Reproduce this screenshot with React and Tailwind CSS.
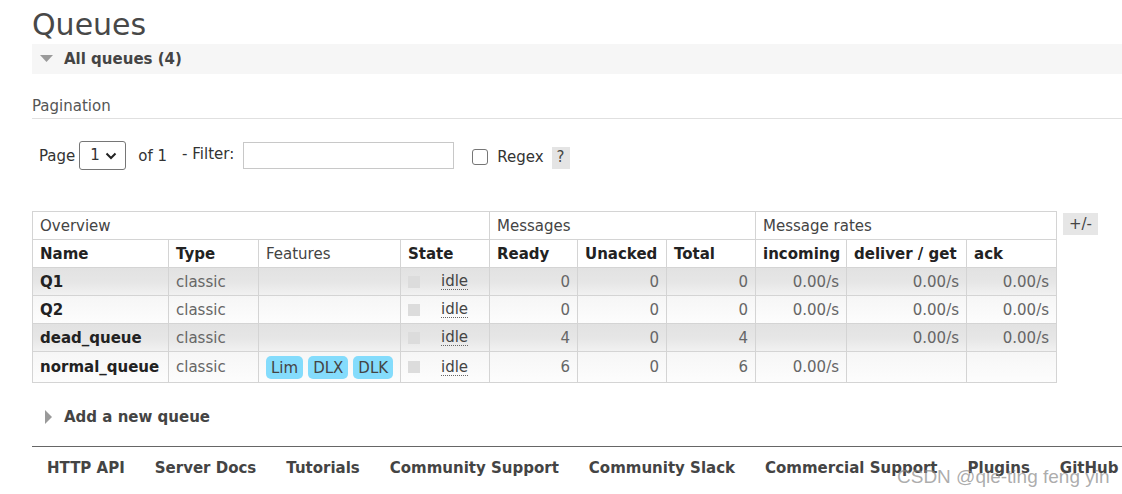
import React from "react";

const rows = [
  { name: "Q1", features: [], ready: 0, unacked: 0, total: 0, incoming: "0.00/s", deliver: "0.00/s", ack: "0.00/s" },
  { name: "Q2", features: [], ready: 0, unacked: 0, total: 0, incoming: "0.00/s", deliver: "0.00/s", ack: "0.00/s" },
  { name: "dead_queue", features: [], ready: 4, unacked: 0, total: 4, incoming: "", deliver: "0.00/s", ack: "0.00/s" },
  { name: "normal_queue", features: ["Lim", "DLX", "DLK"], ready: 6, unacked: 0, total: 6, incoming: "0.00/s", deliver: "", ack: "" },
];

const links = [
  "HTTP API",
  "Server Docs",
  "Tutorials",
  "Community Support",
  "Community Slack",
  "Commercial Support",
  "Plugins",
  "GitHub",
];

function Cell({ children, right, className = "" }) {
  return (
    <td
      className={
        "border border-[#d4d4d4] px-[7px] py-0 align-middle " +
        (right ? "text-right pr-[7px] " : "") +
        className
      }
    >
      {children}
    </td>
  );
}

export default function App() {
  return (
    <div className="relative min-h-[494px] bg-white pl-[32px] font-['DejaVu_Sans',Verdana,sans-serif] text-[15px] text-[#444]">
      <h1 className="pt-[9px] text-[30px] leading-[31px] text-[#484848]">Queues</h1>

      <div className="mt-[4px] flex h-[30px] items-center bg-[#f6f6f6]">
        <svg width="13" height="8" viewBox="0 0 13 8" className="ml-[8px]">
          <polygon points="0,0 13,0 6.5,7" fill="#9a9a9a" />
        </svg>
        <span className="ml-[11px] font-bold text-[#444]">All queues (4)</span>
      </div>

      <div className="mt-[23px] border-b border-[#e0e0e0] pb-[3px] leading-[18px] text-[#555]">
        Pagination
      </div>

      <div className="mt-[22px] flex items-center pl-[7px] text-[#333]">
        <span className="mt-[2px]">Page</span>
        <div className="ml-[4px] flex h-[29px] w-[47px] items-center justify-between rounded-[3px] border border-[#767676] pl-[10px] pr-[8px]">
          <span>1</span>
          <svg width="12" height="8" viewBox="0 0 12 8">
            <polyline points="1.5,1.5 6,6 10.5,1.5" fill="none" stroke="#222" strokeWidth="2" />
          </svg>
        </div>
        <span className="ml-[12px] mt-[2px]">of 1</span>
        <span className="ml-[15px] -mt-[2px]">- Filter:</span>
        <div className="ml-[9px] h-[27px] w-[211px] border border-[#c8c8c8] bg-white" />
        <div className="ml-[18px] mt-[2px] h-[16px] w-[16px] rounded-[3px] border border-[#767676] bg-white" />
        <span className="ml-[9px] mt-[4px]">Regex</span>
        <span className="ml-[8px] mt-[4px] flex h-[22px] w-[18px] items-center justify-center bg-[#e4e4e4] text-[#444]">
          ?
        </span>
      </div>

      <div className="mt-[41px] flex items-start gap-[6px]">
        <table className="w-[1024px] table-fixed border-collapse border border-[#d4d4d4] leading-[18px]">
          <colgroup>
            <col className="w-[136px]" />
            <col className="w-[90px]" />
            <col className="w-[142px]" />
            <col className="w-[89px]" />
            <col className="w-[88px]" />
            <col className="w-[89px]" />
            <col className="w-[89px]" />
            <col className="w-[91px]" />
            <col className="w-[120px]" />
            <col className="w-[90px]" />
          </colgroup>
          <thead>
            <tr className="h-[28px] text-left font-normal text-[#444]">
              <th colSpan={4} className="border border-[#d4d4d4] px-[7px] font-normal">Overview</th>
              <th colSpan={3} className="border border-[#d4d4d4] px-[7px] font-normal">Messages</th>
              <th colSpan={3} className="border border-[#d4d4d4] px-[7px] font-normal">Message rates</th>
            </tr>
            <tr className="h-[28px] text-left text-[#222]">
              <th className="border border-[#d4d4d4] px-[7px] font-bold">Name</th>
              <th className="border border-[#d4d4d4] px-[7px] font-bold">Type</th>
              <th className="border border-[#d4d4d4] px-[7px] font-normal text-[#444]">Features</th>
              <th className="border border-[#d4d4d4] px-[7px] font-bold">State</th>
              <th className="border border-[#d4d4d4] px-[7px] font-bold">Ready</th>
              <th className="border border-[#d4d4d4] px-[7px] font-bold">Unacked</th>
              <th className="border border-[#d4d4d4] px-[7px] font-bold">Total</th>
              <th className="border border-[#d4d4d4] px-[7px] font-bold">incoming</th>
              <th className="border border-[#d4d4d4] px-[7px] font-bold">deliver / get</th>
              <th className="border border-[#d4d4d4] px-[7px] font-bold">ack</th>
            </tr>
          </thead>
          <tbody>
            {rows.map((r, i) => (
              <tr
                key={r.name}
                className={
                  (i === 3 ? "h-[31px] " : "h-[28px] ") +
                  (i % 2 === 0
                    ? "bg-gradient-to-b from-[#e2e2e2] via-[#e6e6e6] to-[#f2f2f2]"
                    : "bg-gradient-to-b from-[#f6f6f6] to-[#fdfdfd]")
                }
              >
                <Cell className="font-bold text-[#222]">{r.name}</Cell>
                <Cell className="text-[#666]">classic</Cell>
                <Cell>
                  <div className="flex gap-[5px] pt-[1px]">
                    {r.features.map((f) => (
                      <span
                        key={f}
                        className="flex h-[23px] items-center rounded-[5px] bg-[#84dcfc] px-[5px] text-[#444]"
                      >
                        {f}
                      </span>
                    ))}
                  </div>
                </Cell>
                <Cell>
                  <div className="flex items-center">
                    <span className="h-[12px] w-[12px] bg-[#dcdcdc]" />
                    <span className="ml-[21px] border-b border-dotted border-[#666] leading-[16px] text-[#444]">
                      idle
                    </span>
                  </div>
                </Cell>
                <Cell right className="text-[#666]">{r.ready}</Cell>
                <Cell right className="text-[#666]">{r.unacked}</Cell>
                <Cell right className="text-[#666]">{r.total}</Cell>
                <Cell right className="text-[#666]">{r.incoming}</Cell>
                <Cell right className="text-[#666]">{r.deliver}</Cell>
                <Cell right className="text-[#666]">{r.ack}</Cell>
              </tr>
            ))}
          </tbody>
        </table>
        <span className="mt-[2px] flex h-[22px] w-[35px] items-center justify-center bg-[#e6e6e6] text-[#444]">
          +/-
        </span>
      </div>

      <div className="mt-[23px] flex h-[22px] items-center">
        <svg width="8" height="14" viewBox="0 0 8 14" className="ml-[13px]">
          <polygon points="0,0 7,7 0,14" fill="#9a9a9a" />
        </svg>
        <span className="ml-[11px] font-bold text-[#444]">Add a new queue</span>
      </div>

      <div className="mt-[18px] border-t border-[#666]" />

      <div className="flex gap-[30px] pl-[15px] pt-[10px] font-bold text-[#444]">
        {links.map((l) => (
          <span key={l} className="whitespace-nowrap">
            {l}
          </span>
        ))}
      </div>

      <span className="absolute left-[897px] top-[463px] whitespace-nowrap font-['Liberation_Sans',Arial,sans-serif] text-[19px] text-[#888]/70">
        CSDN @qie-ting feng yin
      </span>
    </div>
  );
}
